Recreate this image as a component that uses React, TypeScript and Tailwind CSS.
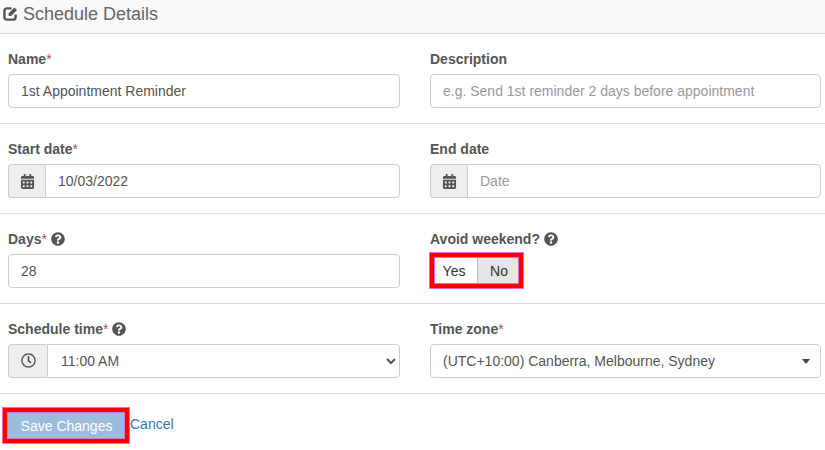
import { FaCalendarAlt, FaQuestionCircle, FaRegClock } from "react-icons/fa";

function Label({ text, required, help }: { text: string; required?: boolean; help?: boolean }) {
  return (
    <label className="flex items-center h-5 mb-[5px] text-sm font-bold text-[#555]">
      {text}
      {required && <span className="font-normal text-[#a95452]">*</span>}
      {help && <FaQuestionCircle className="ml-1 text-[14px] text-[#555]" />}
    </label>
  );
}

const control =
  "h-[34px] w-full rounded-[4px] border border-[#ccc] bg-white px-3 text-sm text-[#555] outline-none placeholder:text-[#999]";

function Addon({ width, children }: { width: string; children: React.ReactNode }) {
  return (
    <span className={`${width} flex h-[34px] shrink-0 items-center justify-center rounded-l-[4px] border border-r-0 border-[#ccc] bg-[#eee] text-sm text-[#555]`}>
      {children}
    </span>
  );
}

function EditIcon() {
  return (
    <svg viewBox="0 0 15 15" className="-mt-px h-[15px] w-[15px] text-[#555]" aria-hidden="true">
      <path
        d="M12.6 8.5V11.2a2.4 2.4 0 0 1-2.4 2.4H3.8a2.4 2.4 0 0 1-2.4-2.4V4.8a2.4 2.4 0 0 1 2.4-2.4H8.5"
        fill="none"
        stroke="currentColor"
        strokeWidth="2.4"
      />
      <path d="M5.6 7.3 11.4 1.5 14 4.1 8.2 9.9H5.6Z" fill="currentColor" />
    </svg>
  );
}

export default function App() {
  return (
    <div className="h-[450px] w-[825px] overflow-hidden bg-white font-['Liberation_Sans',Arial,sans-serif] text-sm text-[#555]">
      <div className="flex h-[34px] items-center gap-[5px] border-b border-[#ddd] bg-[#f9f9f9] pb-[5px] pl-[3px] text-lg text-[#666]">
        <EditIcon />
        <span>Schedule Details</span>
      </div>

      <div className="grid h-[90px] grid-cols-[392px_391px] gap-x-[30px] border-b border-[#ddd] pl-2 pt-[15px]">
        <div>
          <Label text="Name" required />
          <input className={control} defaultValue="1st Appointment Reminder" />
        </div>
        <div>
          <Label text="Description" />
          <input className={control} placeholder="e.g. Send 1st reminder 2 days before appointment" />
        </div>
      </div>

      <div className="grid h-[90px] grid-cols-[392px_391px] gap-x-[30px] border-b border-[#ddd] pl-2 pt-[15px]">
        <div>
          <Label text="Start date" required />
          <div className="flex">
            <Addon width="w-[37px]"><FaCalendarAlt className="text-[15px]" /></Addon>
            <input className={`${control} rounded-l-none`} defaultValue="10/03/2022" />
          </div>
        </div>
        <div>
          <Label text="End date" />
          <div className="flex">
            <Addon width="w-[37px]"><FaCalendarAlt className="text-[15px]" /></Addon>
            <input className={`${control} rounded-l-none`} placeholder="Date" />
          </div>
        </div>
      </div>

      <div className="grid h-[90px] grid-cols-[392px_391px] gap-x-[30px] border-b border-[#ddd] pl-2 pt-[15px]">
        <div>
          <Label text="Days" required help />
          <input className={control} defaultValue="28" />
        </div>
        <div>
          <Label text="Avoid weekend?" help />
          <div className="-ml-px -mt-[2px] w-[95px] border border-[#ff66cc]">
            <div className="border-4 border-[#ff0000]">
              <div className="flex h-[27px] border border-[#d070d0]">
                <button className="h-full w-[42px] bg-white pr-1 text-sm text-[#333]">Yes</button>
                <button className="h-full w-[41px] border-l border-[#bbb] bg-[#e6e6e6] pl-[2px] text-sm text-[#333]">No</button>
              </div>
            </div>
          </div>
        </div>
      </div>

      <div className="grid h-[90px] grid-cols-[392px_391px] gap-x-[30px] border-b border-[#ddd] pl-2 pt-[15px]">
        <div>
          <Label text="Schedule time" required help />
          <div className="flex">
            <Addon width="w-[39px]"><FaRegClock className="-mt-[2px] text-[15px]" /></Addon>
            <select className={`${control} rounded-l-none pl-[9px]`} defaultValue="11:00 AM">
              <option>11:00 AM</option>
            </select>
          </div>
        </div>
        <div>
          <Label text="Time zone" required />
          <div className={`${control} flex items-center justify-between pr-[10px]`}>
            <span>(UTC+10:00) Canberra, Melbourne, Sydney</span>
            <span className="h-0 w-0 border-x-4 border-t-[5px] border-x-transparent border-t-[#444]" />
          </div>
        </div>
      </div>

      <div className="flex items-start pl-[2px] pt-[13px]">
        <div className="border border-[#ff66cc]">
          <div className="border-4 border-[#ff0000]">
            <button className="block h-[27px] w-[118px] border border-[#c080d8] bg-[#9cbcdc] pl-px text-sm text-white">Save Changes</button>
          </div>
        </div>
        <a className="mt-[7px] text-sm text-[#337ab7]" href="#">Cancel</a>
      </div>
    </div>
  );
}
